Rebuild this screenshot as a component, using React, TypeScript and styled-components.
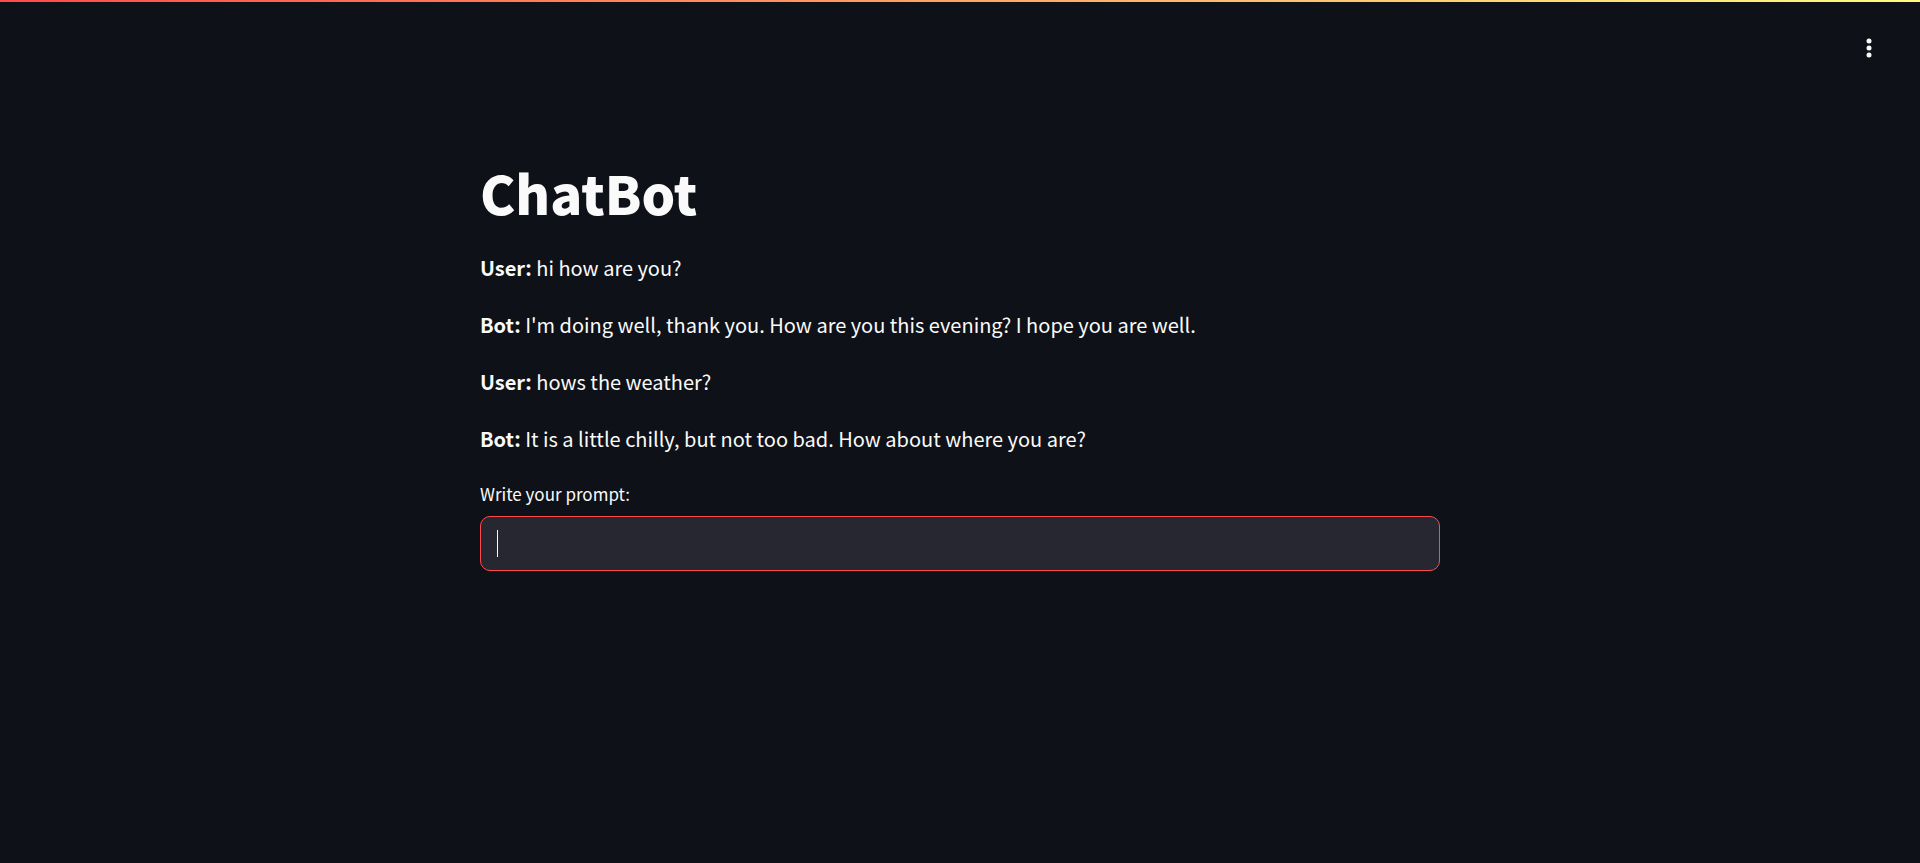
import React, { useState } from "react";
import styled, { createGlobalStyle, keyframes } from "styled-components";

const GlobalStyle = createGlobalStyle`
  *, *::before, *::after { box-sizing: border-box; }
  body {
    margin: 0;
    background: #0e1117;
    color: #fafafa;
    font-family: "Noto Sans CJK SC", "Source Sans Pro", sans-serif;
    font-size: 20px;
    line-height: 35px;
  }
`;

const Page = styled.div`
  min-height: 100vh;
`;

const Decoration = styled.div`
  height: 2px;
  background: linear-gradient(90deg, #ff4b4b, #fffd80);
`;

const Header = styled.header`
  display: flex;
  justify-content: flex-end;
  align-items: center;
  height: 92px;
  padding: 0 35px;
`;

const MenuButton = styled.button`
  display: flex;
  align-items: center;
  justify-content: center;
  width: 32px;
  height: 44px;
  padding: 0;
  border: 0;
  border-radius: 10px;
  background: transparent;
  color: #fafafa;
  cursor: pointer;
`;

const Main = styled.main`
  width: 100%;
  max-width: 1004px;
  margin: 0 auto;
  padding: 62px 22px 128px;
`;

const Title = styled.h1`
  margin: 0 0 22px;
  font-size: 53px;
  font-weight: 900;
  line-height: 72px;
`;

const Messages = styled.div`
  display: flex;
  flex-direction: column;
  gap: 22px;
  margin-bottom: 22px;
`;

const Message = styled.p`
  margin: 0;
`;

const Author = styled.strong`
  font-weight: 700;
`;

const Label = styled.label`
  display: block;
  margin-bottom: 7px;
  font-size: 17px;
  line-height: 31px;
`;

const Field = styled.div`
  position: relative;
`;

const Input = styled.input`
  display: block;
  width: 100%;
  height: 55px;
  padding: 0 16px;
  border: 1px solid #ff4b4b;
  border-radius: 10px;
  outline: none;
  background: #262730;
  color: #fafafa;
  caret-color: transparent;
  font: inherit;

  &:not(:placeholder-shown) {
    caret-color: #fafafa;
  }
`;

const blink = keyframes`
  0%, 80% { opacity: 1; }
  81%, 100% { opacity: 0; }
`;

const Caret = styled.span`
  position: absolute;
  top: 14px;
  bottom: 14px;
  left: 17px;
  width: 1px;
  background: #fafafa;
  pointer-events: none;
  animation: ${blink} 5s infinite;
`;

const messages = [
  { author: "User", text: "hi how are you?" },
  { author: "Bot", text: "I'm doing well, thank you. How are you this evening? I hope you are well." },
  { author: "User", text: "hows the weather?" },
  { author: "Bot", text: "It is a little chilly, but not too bad. How about where you are?" },
];

export default function App() {
  const [prompt, setPrompt] = useState("");

  return (
    <>
      <GlobalStyle />
      <Page>
        <Decoration />
        <Header>
          <MenuButton type="button" aria-label="Main menu">
            <svg width="6" height="20" viewBox="0 0 6 20" fill="currentColor" aria-hidden="true">
              <circle cx="3" cy="3" r="2.5" />
              <circle cx="3" cy="10" r="2.5" />
              <circle cx="3" cy="17" r="2.5" />
            </svg>
          </MenuButton>
        </Header>
        <Main>
          <Title>ChatBot</Title>
          <Messages>
            {messages.map((message, index) => (
              <Message key={index}>
                <Author>{message.author}:</Author> {message.text}
              </Message>
            ))}
          </Messages>
          <Label htmlFor="prompt">Write your prompt:</Label>
          <Field>
            <Input
              id="prompt"
              type="text"
              placeholder=" "
              autoComplete="off"
              autoFocus
              value={prompt}
              onChange={(event) => setPrompt(event.target.value)}
            />
            {prompt === "" && <Caret />}
          </Field>
        </Main>
      </Page>
    </>
  );
}
